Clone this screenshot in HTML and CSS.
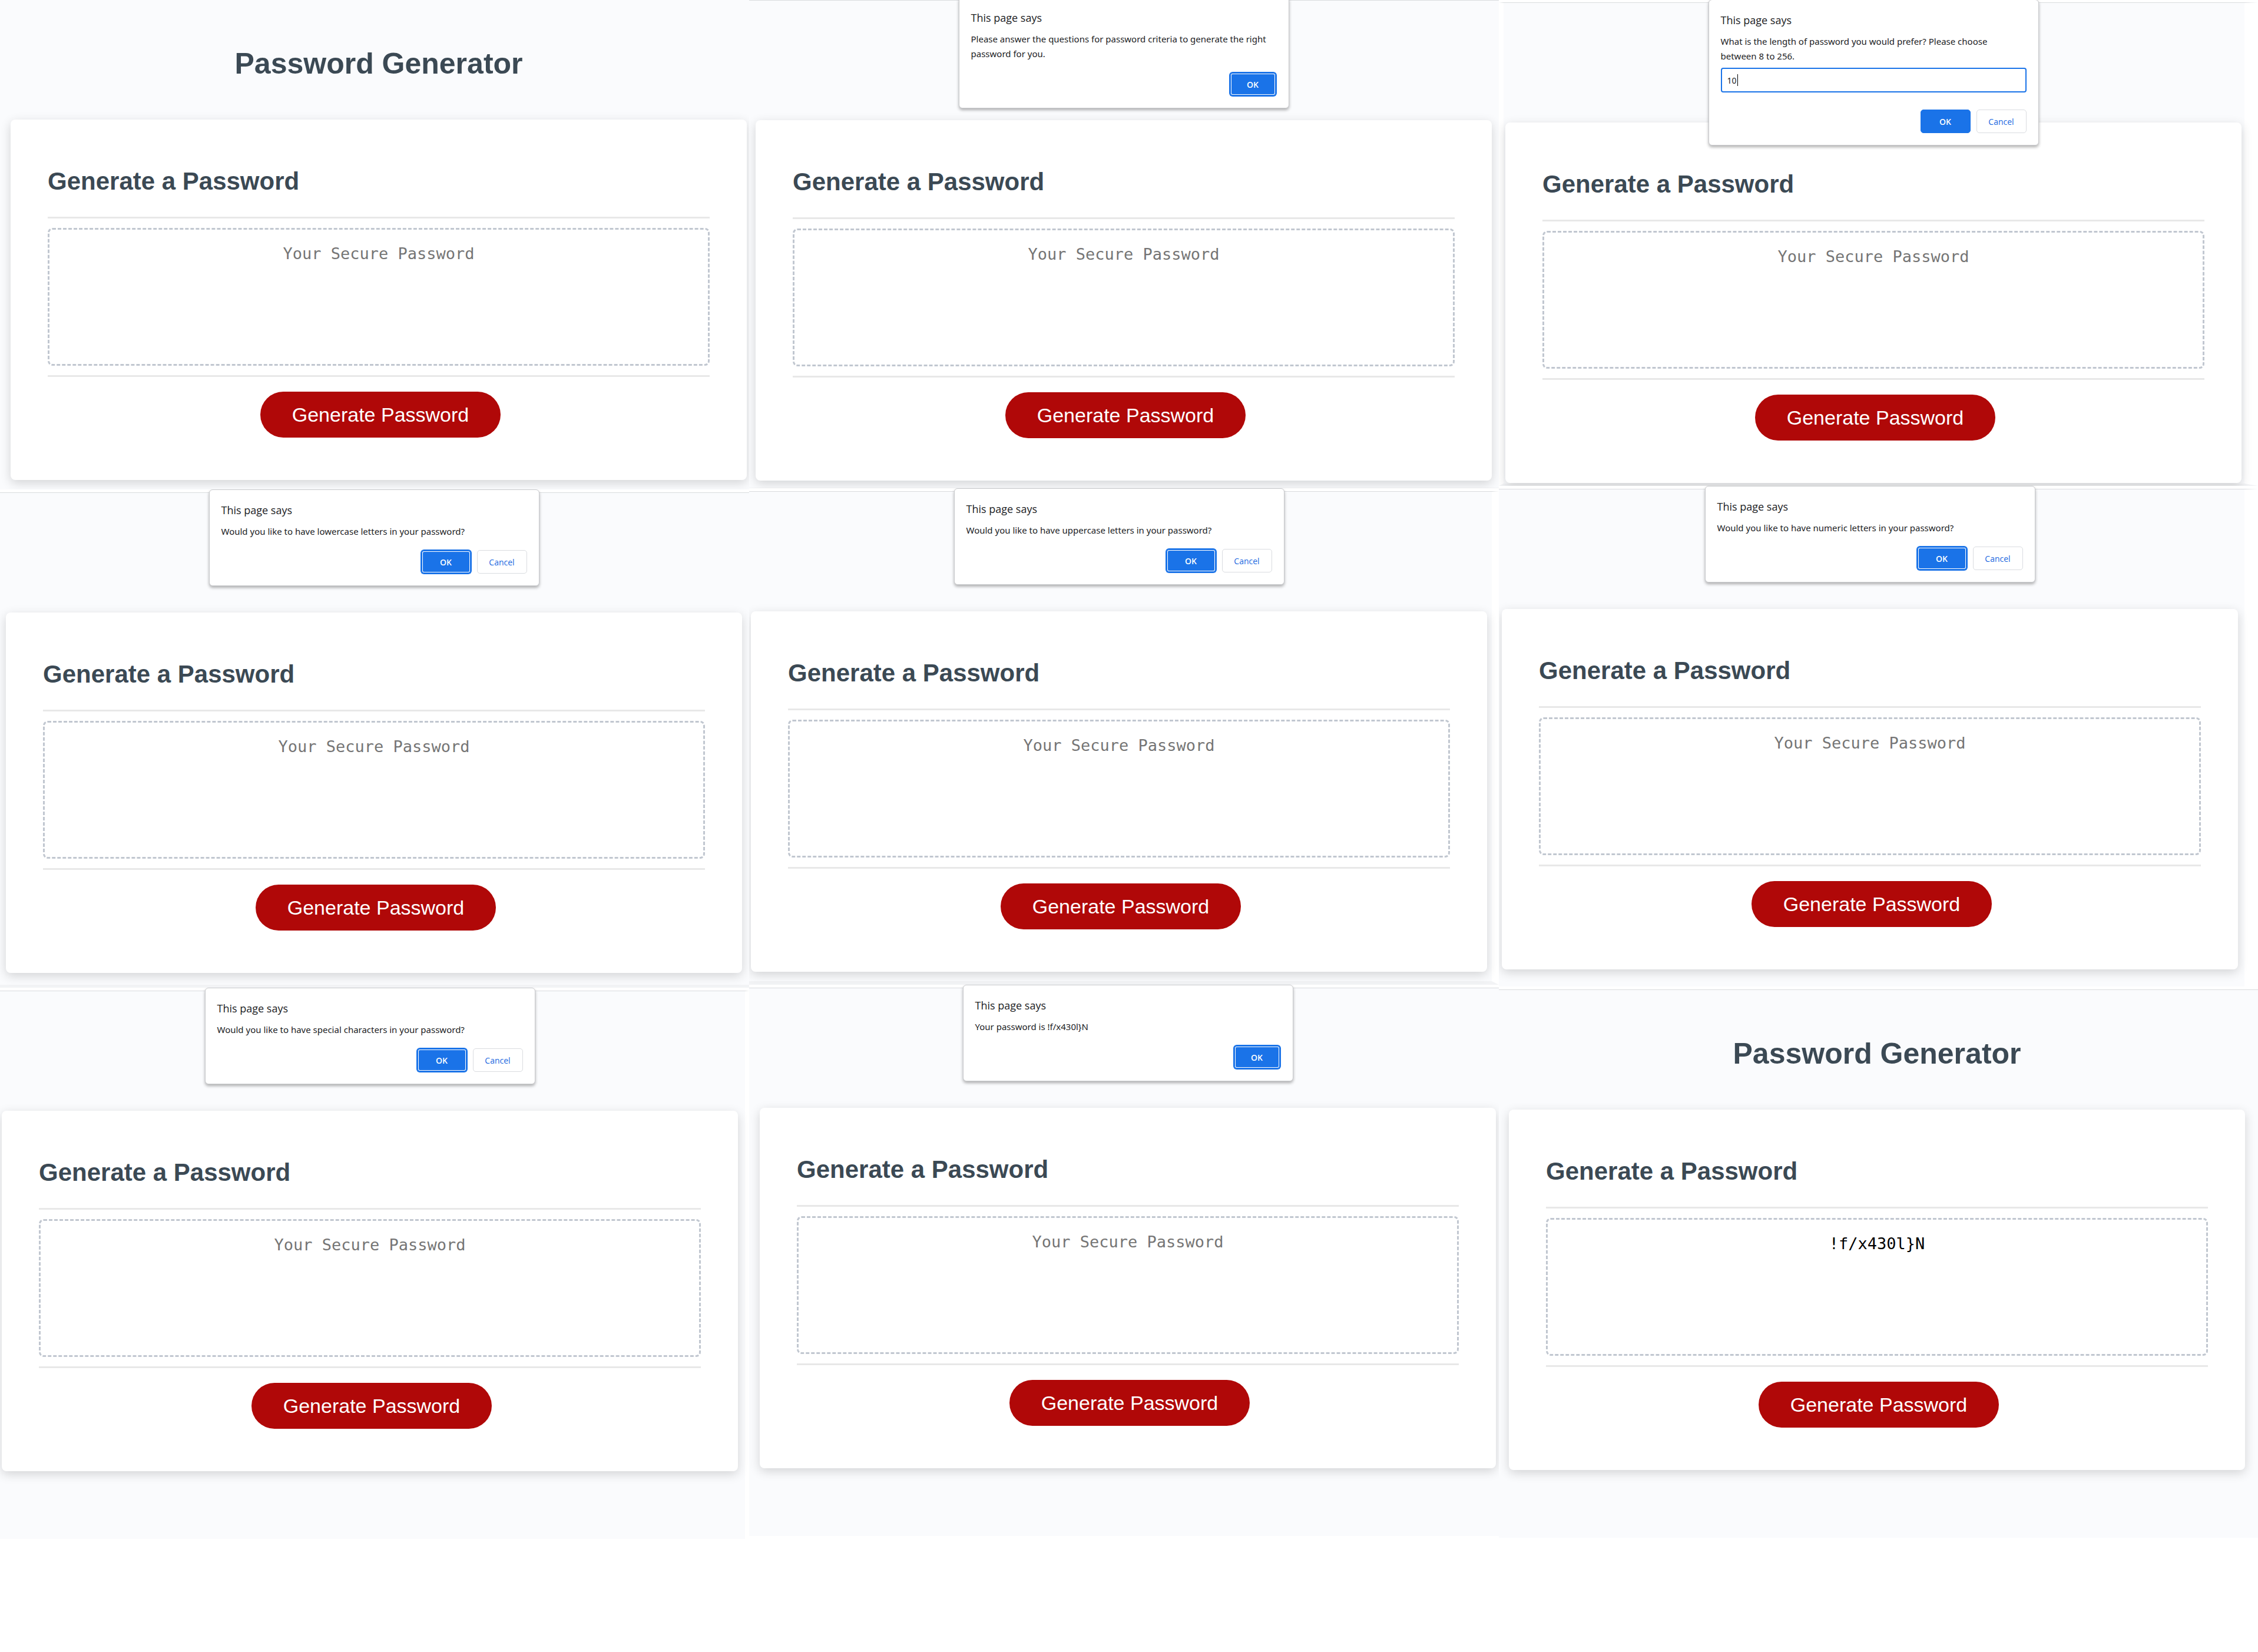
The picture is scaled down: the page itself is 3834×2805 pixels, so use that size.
FILE: index.html
```html
<!DOCTYPE html>
<html lang="en">
<head>
<meta charset="utf-8">
<meta name="viewport" content="width=device-width, initial-scale=1">
<title>Password Generator</title>
<link rel="stylesheet" href="styles.css">
</head>
<body>
<main class="board">
  <div class="column">
    <section class="panel panel--first">
      <div class="page page--start">
        <div class="stage stage--titled">
          <header class="masthead"><h1>Password Generator</h1></header>
          <div class="card">
            <h2 id="t1">Generate a Password</h2>
            <div class="card-body"><textarea readonly placeholder="Your Secure Password" aria-labelledby="t1"></textarea></div>
            <div class="card-footer"><button class="generate" type="button">Generate Password</button></div>
          </div>
        </div>
      </div>
    </section>
    <section class="panel">
      <div class="page page--lowercase">
        <div class="stage">
          <div class="card">
            <h2 id="t4">Generate a Password</h2>
            <div class="card-body"><textarea readonly placeholder="Your Secure Password" aria-labelledby="t4"></textarea></div>
            <div class="card-footer"><button class="generate" type="button">Generate Password</button></div>
          </div>
          <div class="dialog" role="dialog" aria-labelledby="d4">
            <h3 id="d4">This page says</h3>
            <p>Would you like to have lowercase letters in your password?</p>
            <div class="actions"><button class="ok focused" type="button">OK</button><button class="cancel" type="button">Cancel</button></div>
          </div>
        </div>
      </div>
    </section>
    <section class="panel">
      <div class="page page--special">
        <div class="stage">
          <div class="card">
            <h2 id="t7">Generate a Password</h2>
            <div class="card-body"><textarea readonly placeholder="Your Secure Password" aria-labelledby="t7"></textarea></div>
            <div class="card-footer"><button class="generate" type="button">Generate Password</button></div>
          </div>
          <div class="dialog" role="dialog" aria-labelledby="d7">
            <h3 id="d7">This page says</h3>
            <p>Would you like to have special characters in your password?</p>
            <div class="actions"><button class="ok focused" type="button">OK</button><button class="cancel" type="button">Cancel</button></div>
          </div>
        </div>
      </div>
    </section>
  </div>

  <div class="column">
    <section class="panel panel--first">
      <div class="page page--intro">
        <div class="stage">
          <div class="card">
            <h2 id="t2">Generate a Password</h2>
            <div class="card-body"><textarea readonly placeholder="Your Secure Password" aria-labelledby="t2"></textarea></div>
            <div class="card-footer"><button class="generate" type="button">Generate Password</button></div>
          </div>
          <div class="dialog" role="dialog" aria-labelledby="d2">
            <h3 id="d2">This page says</h3>
            <p>Please answer the questions for password criteria to generate the right password for you.</p>
            <div class="actions"><button class="ok ok--single focused" type="button">OK</button></div>
          </div>
        </div>
      </div>
    </section>
    <section class="panel">
      <div class="page page--uppercase">
        <div class="stage">
          <div class="card">
            <h2 id="t5">Generate a Password</h2>
            <div class="card-body"><textarea readonly placeholder="Your Secure Password" aria-labelledby="t5"></textarea></div>
            <div class="card-footer"><button class="generate" type="button">Generate Password</button></div>
          </div>
          <div class="dialog" role="dialog" aria-labelledby="d5">
            <h3 id="d5">This page says</h3>
            <p>Would you like to have uppercase letters in your password?</p>
            <div class="actions"><button class="ok focused" type="button">OK</button><button class="cancel" type="button">Cancel</button></div>
          </div>
        </div>
      </div>
    </section>
    <section class="panel">
      <div class="page page--result">
        <div class="stage">
          <div class="card">
            <h2 id="t8">Generate a Password</h2>
            <div class="card-body"><textarea readonly placeholder="Your Secure Password" aria-labelledby="t8"></textarea></div>
            <div class="card-footer"><button class="generate" type="button">Generate Password</button></div>
          </div>
          <div class="dialog" role="dialog" aria-labelledby="d8">
            <h3 id="d8">This page says</h3>
            <p>Your password is !f/x430l}N</p>
            <div class="actions"><button class="ok ok--single focused" type="button">OK</button></div>
          </div>
        </div>
      </div>
    </section>
  </div>

  <div class="column">
    <section class="panel">
      <div class="page page--length">
        <div class="stage">
          <div class="card">
            <h2 id="t3">Generate a Password</h2>
            <div class="card-body"><textarea readonly placeholder="Your Secure Password" aria-labelledby="t3"></textarea></div>
            <div class="card-footer"><button class="generate" type="button">Generate Password</button></div>
          </div>
          <div class="dialog" role="dialog" aria-labelledby="d3">
            <h3 id="d3">This page says</h3>
            <label for="length">What is the length of password you would prefer? Please choose between 8 to 256.</label>
            <div class="field"><input id="length" type="text" value="10"><span class="caret"></span></div>
            <div class="actions actions--prompt"><button class="ok" type="button">OK</button><button class="cancel" type="button">Cancel</button></div>
          </div>
        </div>
      </div>
    </section>
    <section class="panel">
      <div class="page page--numeric">
        <div class="stage">
          <div class="card">
            <h2 id="t6">Generate a Password</h2>
            <div class="card-body"><textarea readonly placeholder="Your Secure Password" aria-labelledby="t6"></textarea></div>
            <div class="card-footer"><button class="generate" type="button">Generate Password</button></div>
          </div>
          <div class="dialog" role="dialog" aria-labelledby="d6">
            <h3 id="d6">This page says</h3>
            <p>Would you like to have numeric letters in your password?</p>
            <div class="actions"><button class="ok focused" type="button">OK</button><button class="cancel" type="button">Cancel</button></div>
          </div>
        </div>
      </div>
    </section>
    <section class="panel">
      <div class="page page--final">
        <div class="stage stage--titled">
          <header class="masthead"><h1>Password Generator</h1></header>
          <div class="card">
            <h2 id="t9">Generate a Password</h2>
            <div class="card-body"><textarea readonly placeholder="Your Secure Password" aria-labelledby="t9">!f/x430l}N</textarea></div>
            <div class="card-footer"><button class="generate" type="button">Generate Password</button></div>
          </div>
        </div>
      </div>
    </section>
  </div>
</main>
</body>
</html>
```

FILE: styles.css
```css
*, *::before, *::after { box-sizing: border-box; }

body {
  margin: 0;
  background: #fff;
  font-family: "Liberation Sans", Arial, sans-serif;
  color: #3b4954;
}

h1, h2, h3, p { margin: 0; }

.board {
  display: grid;
  grid-template-columns: 1272fr 1273fr 1289fr;
  align-items: start;
}

/* One step of the walkthrough: a white strip, then the page below it */
.panel {
  overflow: hidden;
  padding-top: 5px;
  background: #fff;
}
.column:last-child .panel:first-child { padding-top: 4px; }
.panel--first { padding-top: 0; }

.page {
  border: 0 solid #fff;
  border-top: 1px solid #d9dbde;
  background: #fafbfd;
}
.page--start { border-top: 0; padding: 0 4px 16px 18px; }
.page--lowercase { border-bottom: 5px solid #f2f3f5; padding: 0 12px 20px 10px; }
.page--special { border-right-width: 7px; padding: 0 12px 115px 3px; }
.page--intro { border-bottom: 1px solid #f2f3f5; padding: 0 12px 12px 11px; }
.page--uppercase { border-right-width: 12px; border-bottom: 6px solid #f2f3f5; padding: 0 8px 16px 3px; }
.page--result { padding: 0 5px 115px 18px; }
.page--length { border-right-width: 23px; border-left-width: 8px; border-bottom: 4px solid #f2f3f5; padding: 0 5px 1px 3px; }
.page--numeric { border-right-width: 23px; padding: 0 11px 29px 5px; }
.page--final { padding: 0 22px 115px 17px; }

.stage { position: relative; padding-top: 203px; }
.stage--titled { padding-top: 0; }

.masthead { padding: 78px 0 65px; text-align: center; }
h1 { font-size: 50px; line-height: 60px; }

.card {
  padding: 81px 63px 72px;
  border-radius: 8px;
  background: #fff;
  box-shadow: 0 5px 18px rgba(0, 0, 0, 0.16);
}
h2 {
  padding-bottom: 36px;
  border-bottom: 3px solid #e8e8e8;
  font-size: 42px;
  line-height: 48px;
}
.card-body { padding: 16px 0; border-bottom: 3px solid #e8e8e8; }

textarea {
  display: block;
  width: 100%;
  height: 234px;
  padding: 25px 16px;
  border: 3px dashed #c1c7d0;
  border-radius: 8px;
  outline: 0;
  background: transparent;
  color: #000;
  font-family: "DejaVu Sans Mono", "Liberation Mono", monospace;
  font-size: 27px;
  line-height: 32px;
  text-align: center;
  resize: none;
}
textarea::placeholder { color: #757575; }

.card-footer { display: flex; justify-content: center; padding: 25px 0 0 6px; }
.generate {
  height: 78px;
  padding: 0 54px;
  border: 0;
  border-radius: 39px;
  background: #b00808;
  color: #fff;
  font-family: inherit;
  font-size: 34px;
  line-height: 40px;
}

/* Browser dialog hanging over the top edge of the page */
.dialog {
  position: absolute;
  top: -6px;
  right: 0;
  left: 0;
  width: 561px;
  max-width: 100%;
  margin: 0 auto;
  padding: 22px 20px 20px;
  border: 1px solid #c8c9cc;
  border-radius: 6px;
  background: #fff;
  box-shadow: 0 3px 5px rgba(0, 0, 0, 0.3);
  color: #202124;
  font-family: "Noto Sans", "Open Sans", sans-serif;
  font-size: 15px;
  line-height: 25px;
}
.dialog h3 {
  margin-bottom: 11px;
  font-family: "Open Sans", "Noto Sans", sans-serif;
  font-size: 18px;
  font-weight: 400;
}
.dialog label { display: block; padding-right: 20px; }

.field { position: relative; padding-top: 7px; }
.field input {
  display: block;
  width: 100%;
  height: 42px;
  padding: 0 9px;
  border: 2px solid #1a73e8;
  border-radius: 4px;
  outline: 0;
  color: #202124;
  font: inherit;
  font-size: 14px;
}
.caret {
  position: absolute;
  top: 18px;
  left: 28px;
  width: 1px;
  height: 20px;
  background: #000;
}

.actions { display: flex; justify-content: flex-end; gap: 10px; padding-top: 19px; }
.actions--prompt { padding-top: 29px; }
.actions button {
  width: 85px;
  height: 40px;
  padding: 0;
  border: 1px solid #dadce0;
  border-radius: 5px;
  background: #fff;
  color: #1a67e0;
  font-family: "Open Sans", "Noto Sans", sans-serif;
  font-size: 14px;
  font-weight: 500;
}
.actions .ok { border-color: #1a73e8; background: #1a73e8; color: #fff; font-weight: 600; }
.actions .ok--single { width: 79px; margin-right: 1px; }
.actions .focused {
  box-shadow: 0 0 0 1px #1a73e8, inset 0 0 0 1px #1a73e8, inset 0 0 0 2px #fff;
}
```
